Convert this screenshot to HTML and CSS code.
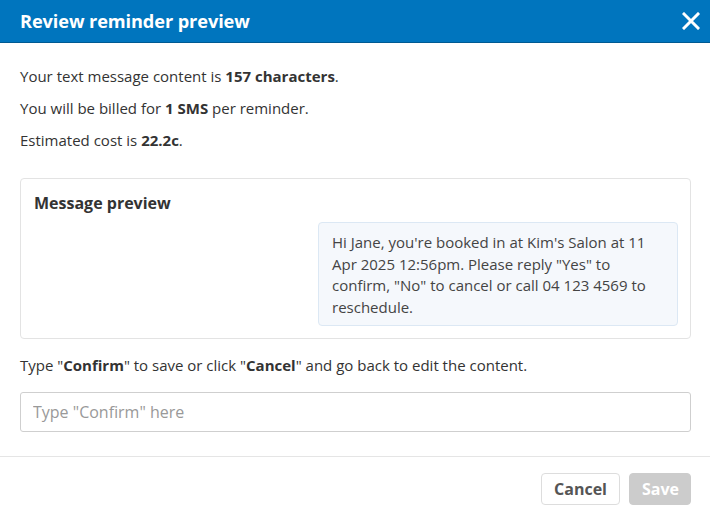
FILE: index.html
```html
<!DOCTYPE html>
<html>
<head>
<meta charset="utf-8">
<link rel="stylesheet" href="styles.css">
</head>
<body>
<div class="modal">
  <div class="header">
    <h1 class="title">Review reminder preview</h1>
    <button class="close" aria-label="Close">
      <svg width="18" height="18" viewBox="0 0 18 18"><path d="M2 2L16 16M16 2L2 16" stroke="#fff" stroke-width="3" stroke-linecap="square"/></svg>
    </button>
  </div>
  <div class="body">
    <p class="info">Your text message content is <b>157 characters</b>.</p>
    <p class="info">You will be billed for <b>1 SMS</b> per reminder.</p>
    <p class="info">Estimated cost is <b>22.2c</b>.</p>
    <div class="card">
      <h2 class="card-title">Message preview</h2>
      <div class="bubble-row">
        <div class="bubble">Hi Jane, you're booked in at Kim's Salon at 11 Apr 2025 12:56pm. Please reply "Yes" to confirm, "No" to cancel or call 04 123 4569 to reschedule.</div>
      </div>
    </div>
    <p class="confirm-text">Type "<b>Confirm</b>" to save or click "<b>Cancel</b>" and go back to edit the content.</p>
    <input class="input" type="text" placeholder="Type &quot;Confirm&quot; here">
  </div>
  <div class="footer">
    <button class="btn btn-cancel">Cancel</button>
    <button class="btn btn-save">Save</button>
  </div>
</div>
</body>
</html>
```
FILE: styles.css
```css
* { box-sizing: border-box; }
html, body { margin: 0; padding: 0; background: #fff; }
body { font-family: "Open Sans", "Liberation Sans", sans-serif; color: #333; }
.modal { width: 710px; height: 517px; display: flex; flex-direction: column; }
.header {
  height: 43px; background: #0075be; border-bottom: 1px solid #005a92;
  display: flex; align-items: center; justify-content: space-between;
  padding: 0 9px 0 20px; flex: none;
}
.title { margin: 0; color: #fff; font-size: 18.2px; font-weight: 700; letter-spacing: -0.1px; }
.close { background: none; border: 0; padding: 0; width: 20px; height: 20px; display: flex; align-items: center; justify-content: center; cursor: pointer; }
.body { padding: 23px 19px 0 20px; flex: 1; }
.info { margin: 0 0 12px; font-size: 15px; line-height: 20px; }
.info b { font-weight: 700; }
.card {
  margin-top: 28px; border: 1px solid #e3e3e3; border-radius: 4px;
  padding: 13px 12px 12px 13px;
}
.card-title { margin: 0; font-size: 16px; font-weight: 700; line-height: 22px; color: #333; }
.bubble-row { display: flex; justify-content: flex-end; margin-top: 8px; }
.bubble {
  width: 360px; background: #f5f8fc; border: 1px solid #dce8f4; border-radius: 4px;
  padding: 9px 12px 7px 13px; font-size: 15px; line-height: 21.6px; color: #444;
}
.confirm-text { margin: 16px 0 17px; font-size: 15px; line-height: 20px; }
.input {
  display: block; width: 100%; height: 40px; border: 1px solid #cfcfcf; border-radius: 3px;
  padding: 0 12px; font-family: inherit; font-size: 16px; color: #333;
}
.input::placeholder { color: #999; }
.footer {
  border-top: 1px solid #e5e5e5; height: 61px; display: flex; justify-content: flex-end;
  align-items: flex-start; gap: 9px; padding: 16px 19px 0 0; flex: none;
}
.btn {
  height: 32px; border-radius: 4px; font-family: inherit; font-size: 16px; font-weight: 700;
  padding: 0 12px; cursor: pointer;
}
.btn-cancel { width: 79px; background: #fff; border: 1px solid #ddd; color: #555; }
.btn-save { width: 62px; background: #cccccc; border: 1px solid #cccccc; color: #fff; }
```
